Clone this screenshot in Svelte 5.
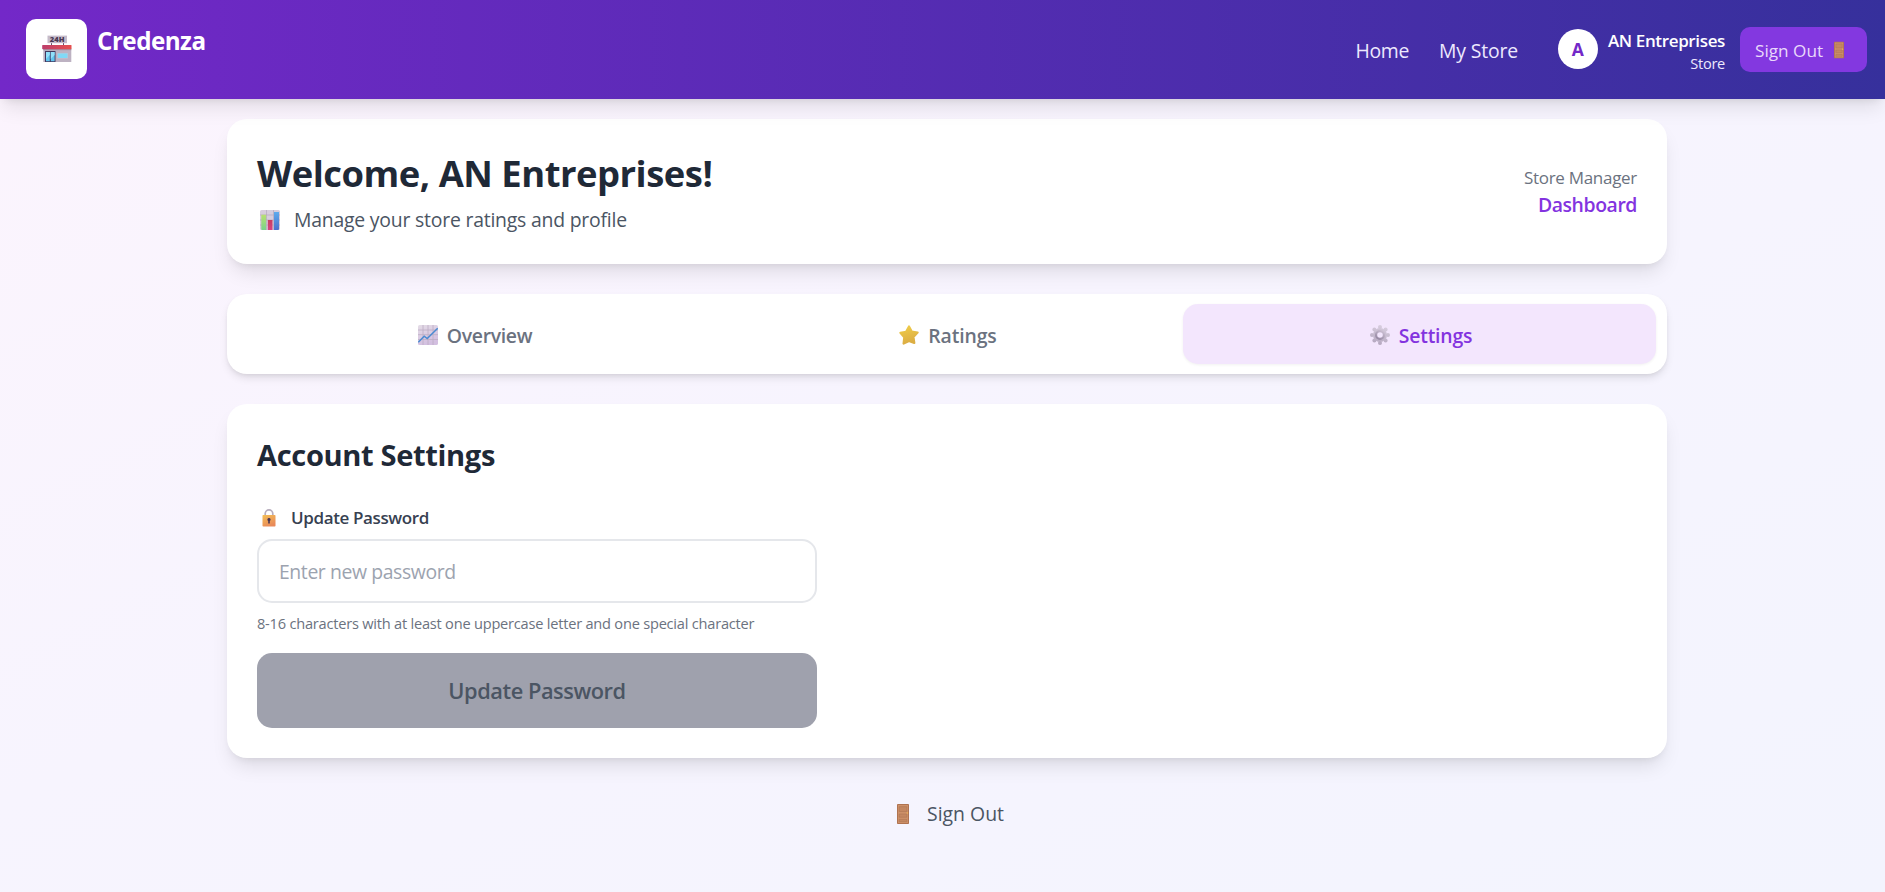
<script>
  let tab = $state('settings');
  let password = $state('');
</script>

{#snippet door(w, h)}
  <svg width={w} height={h} viewBox="0 0 12 20">
    <rect width="12" height="20" rx="0.8" fill="#b07350" />
    <rect x="1" y="1" width="10" height="18" fill="#cd9069" />
    <path d="M2.2 2.7h7.6v4.8H2.2zM2.2 10h7.6v3.2H2.2zM2.2 15.4h7.6v2.2H2.2z" fill="#c48761" stroke="#ae7554" stroke-width=".6" />
    <circle cx="10.4" cy="9" r=".8" fill="#efb052" />
  </svg>
{/snippet}

<div class="page">
  <header>
    <div class="brand">
      <div class="logo">
        <svg width="30" height="28" viewBox="0 0 30 28">
          <path d="M9.5 7v4M21.5 7v4" stroke="#66516d" stroke-width="1" />
          <rect x="5.5" y="0.6" width="19.5" height="7.6" fill="#c5bbca" />
          <text x="15.2" y="7" text-anchor="middle" class="sign">24H</text>
          <rect x="1.3" y="13" width="28" height="14" fill="#bdb2c2" />
          <path d="M1.3 14h28v1.2h-28z" fill="#a396a9" />
          <defs><linearGradient id="awning"><stop stop-color="#bc3d6b" /><stop offset="1" stop-color="#e7504e" /></linearGradient></defs>
          <rect x="0.2" y="10" width="29.3" height="4.2" rx=".6" fill="url(#awning)" />
          <rect x="3" y="16" width="10.5" height="11" fill="#42385f" />
          <path d="M4 17h3.8v9.3H4zM8.8 17h3.8v9.3H8.8z" fill="#62c5ef" />
          <path d="M4 17h3.8v3L4 24zM8.8 17h3.8v3l-3.8 4z" fill="#91e0fa" />
          <rect x="15.2" y="18" width="10.8" height="5.6" fill="#c9bfd0" />
          <rect x="15.7" y="18.4" width="9.8" height="4.6" fill="#81d9f6" />
        </svg>
      </div>
      <span class="name">Credenza</span>
    </div>
    <nav>
      <span class="home">Home</span>
      <span class="my">My Store</span>
    </nav>
    <div class="user">
      <div class="avatar">A</div>
      <div class="who"><b>AN Entreprises</b><span>Store</span></div>
    </div>
    <button class="out">Sign Out {@render door(10, 18)}</button>
  </header>

  <main>
    <section class="card welcome">
      <div>
        <h1>Welcome, AN Entreprises!</h1>
        <p class="sub">
          <svg width="20" height="20" viewBox="0 0 20 20">
            <rect width="20" height="20" rx="1.6" fill="#d7cddd" />
            <path d="M0 5h20M0 10h20M0 15h20M6.5 0v20M13.5 0v20" stroke="#b4a7bd" stroke-width=".7" />
            <defs>
              <linearGradient id="bg" x2="0" y2="1"><stop stop-color="#b9e071" /><stop offset="1" stop-color="#79d18c" /></linearGradient>
              <linearGradient id="br" x2="0" y2="1"><stop stop-color="#c93c60" /><stop offset="1" stop-color="#d74380" /></linearGradient>
              <linearGradient id="bb" x2="0" y2="1"><stop stop-color="#5fabed" /><stop offset="1" stop-color="#4b70cc" /></linearGradient>
            </defs>
            <path d="M1.3 4.7h4.8V20H2Q1.3 20 1.3 19z" fill="url(#bg)" />
            <path d="M7.8 10h4.7v10H7.8z" fill="url(#br)" />
            <path d="M14 2h5v17q0 1-1 1h-4z" fill="url(#bb)" />
          </svg>
          <span>Manage your store ratings and profile</span>
        </p>
      </div>
      <div class="role"><span>Store Manager</span><b>Dashboard</b></div>
    </section>

    <div class="card tabs">
      <button class:active={tab === 'overview'} onclick={() => (tab = 'overview')}>
        <svg width="20" height="20" viewBox="0 0 20 20">
          <defs><linearGradient id="cg" x2=".4" y2="1"><stop stop-color="#e4dce6" /><stop offset="1" stop-color="#d3bfe0" /></linearGradient></defs>
          <rect width="20" height="20" rx="1.6" fill="url(#cg)" />
          <path d="M0 5h20M0 9.7h20M0 14.5h20M5 0v20M10 0v20M15 0v20" stroke="#bcadc4" stroke-width=".8" />
          <path d="M.3 17.2 6.2 11.2 9.2 13.6 19.7 3.2" fill="none" stroke="#4b8bd2" stroke-width="1.5" />
        </svg>
        <span class="overview">Overview</span>
      </button>
      <button class:active={tab === 'ratings'} onclick={() => (tab = 'ratings')}>
        <svg width="20" height="20" viewBox="0 0 20 20">
          <defs><linearGradient id="sg" x2=".3" y2="1"><stop stop-color="#f0cd49" /><stop offset="1" stop-color="#dcae43" /></linearGradient></defs>
          <path d="M10 1.4 12.7 6.6 18.6 7.6 14.4 11.9 15.3 18 10 15.9 4.6 18.6 5.3 12.2 1.4 7.8 7.1 6.8Z" fill="url(#sg)" stroke="url(#sg)" stroke-width="2.2" stroke-linejoin="round" />
        </svg>
        <span class="ratings">Ratings</span>
      </button>
      <button class:active={tab === 'settings'} onclick={() => (tab = 'settings')}>
        <svg width="20" height="20" viewBox="0 0 20 20">
          <defs>
            <linearGradient id="gg" gradientUnits="userSpaceOnUse" x1="13" y1="0" x2="7" y2="20"><stop stop-color="#d9cfe0" /><stop offset="1" stop-color="#b3a6be" /></linearGradient>
            <linearGradient id="gr" x1=".8" y1="0" x2=".2" y2="1"><stop stop-color="#c9bdd1" /><stop offset="1" stop-color="#9688a3" /></linearGradient>
          </defs>
          <g fill="url(#gg)">
            <circle cx="10" cy="10" r="7" />
            <circle cx="10" cy="2" r="2" /><circle cx="10" cy="18" r="2" />
            <circle cx="2" cy="10" r="2" /><circle cx="18" cy="10" r="2" />
            <circle cx="4.4" cy="4.4" r="2" /><circle cx="15.6" cy="15.6" r="2" />
            <circle cx="4.4" cy="15.6" r="2" /><circle cx="15.6" cy="4.4" r="2" />
          </g>
          <circle cx="10" cy="10" r="3.9" fill="#f3e6fd" stroke="url(#gr)" stroke-width="2.2" />
        </svg>
        <span class="settings">Settings</span>
      </button>
    </div>

    <section class="card account">
      <h2>Account Settings</h2>
      <form onsubmit={(e) => e.preventDefault()}>
        <label for="pw">
          <svg width="14" height="18" viewBox="0 0 14 18">
            <defs><linearGradient id="lg" x2=".5" y2="1"><stop stop-color="#f3bf55" /><stop offset="1" stop-color="#e98a59" /></linearGradient></defs>
            <path d="M3.2 7V4.7a3.8 3.8 0 0 1 7.6 0V7" fill="none" stroke="#b7adbd" stroke-width="1.7" />
            <rect x=".5" y="6" width="13" height="11.5" rx=".7" fill="url(#lg)" />
            <path d="M7 9a1.6 1.6 0 0 1 .8 3v2.5H6.2V12A1.6 1.6 0 0 1 7 9z" fill="#483451" />
          </svg>
          <span>Update Password</span>
        </label>
        <input id="pw" type="password" placeholder="Enter new password" bind:value={password} />
        <p class="hint">8-16 characters with at least one uppercase letter and one special character</p>
        <button class="update">Update Password</button>
      </form>
    </section>

    <button class="bottom">{@render door(12, 20)}<span>Sign Out</span></button>
  </main>
</div>

<style>
  :global(body) { overflow: hidden; }
  .page {
    box-sizing: border-box;
    min-height: 892px;
    font-family: "Open Sans", "Noto Sans", sans-serif;
    font-size: 19.4px;
    color: #1f2937;
    background: linear-gradient(to bottom right, #fcf4fd, #f7f4fe 45%, #f3f4fe);
  }
  svg { display: block; flex: none; }
  button { border: 0; padding: 0; margin: 0; background: none; font: inherit; color: inherit; display: flex; align-items: center; }
  h1, h2, p { margin: 0; }

  header {
    position: relative;
    z-index: 1;
    box-sizing: border-box;
    height: 99px;
    padding: 0 18px 1px 26px;
    display: flex;
    align-items: center;
    color: #ede9fe;
    background: linear-gradient(to right, #7328c8, #36309c);
    box-shadow: 0 12px 19px -4px rgba(0, 0, 0, .1), 0 5px 8px -5px rgba(0, 0, 0, .1);
  }
  .brand { display: flex; gap: 10px; margin-right: auto; }
  .logo { width: 61px; height: 60px; border-radius: 10px; background: #fff; display: grid; place-items: center; }
  .sign { font: 800 7.6px "Open Sans", sans-serif; fill: #493752; }
  .name { font-size: 24.25px; font-weight: 700; line-height: 44px; letter-spacing: -.55px; color: #fff; }
  nav { display: flex; gap: 30px; margin-right: 40px; padding-top: 2px; }
  .home { letter-spacing: -.3px; }
  .my { letter-spacing: -.17px; }
  .user { display: flex; align-items: center; gap: 10px; margin-right: 15px; }
  .avatar { width: 40px; height: 40px; border-radius: 50%; background: #fff; color: #7328c8; display: grid; place-items: center; font-size: 17.5px; font-weight: 700; }
  .who { display: flex; flex-direction: column; align-items: flex-end; padding-top: 2px; }
  .who b { font-size: 17px; line-height: 25px; font-weight: 600; letter-spacing: -.36px; color: #fff; }
  .who span { font-size: 14.6px; line-height: 20px; letter-spacing: -.3px; }
  .out { box-sizing: border-box; width: 127px; height: 45px; margin-top: 1px; padding: 1px 0 0 15px; gap: 11px; border-radius: 10px; background: #8338e0; color: #e9d8fb; font-size: 17.2px; }

  main { width: 1440px; margin: 0 0 0 227px; padding-top: 20px; display: flex; flex-direction: column; gap: 30px; }
  .card { box-sizing: border-box; background: #fff; border-radius: 20px; box-shadow: 0 12px 19px -4px rgba(0, 0, 0, .1), 0 5px 8px -5px rgba(0, 0, 0, .1); }
  .welcome { height: 145px; padding: 32px 30px 30px; display: flex; justify-content: space-between; align-items: center; }
  h1 { font-size: 36.4px; line-height: 45px; letter-spacing: -.49px; padding-top: 1px; }
  .sub { display: flex; align-items: center; gap: 14px; margin-top: 9px; padding-left: 3px; line-height: 30px; letter-spacing: -.21px; color: #4b5563; }
  .sub svg { margin-top: -1px; }
  .role { display: flex; flex-direction: column; align-items: flex-end; }
  .role span { font-size: 17px; line-height: 25px; letter-spacing: -.29px; color: #6b7280; }
  .role b { line-height: 30px; font-weight: 560; letter-spacing: -.42px; color: #8333df; }

  .tabs { height: 80px; padding: 10px 11px 10px 10px; display: grid; grid-template-columns: repeat(3, 1fr); box-shadow: 0 5px 8px -1px rgba(0, 0, 0, .1), 0 2px 5px -2px rgba(0, 0, 0, .1); }
  .tabs button { justify-content: center; gap: 9px; padding: 2px 0 0 3px; border-radius: 15px; color: #6b7280; font-weight: 560; }
  .tabs .active { background: #f3e6fd; color: #8333df; box-shadow: 0 1px 3px rgba(0, 0, 0, .06); }
  .overview { letter-spacing: -.32px; }
  .ratings { letter-spacing: -.12px; }
  .settings { letter-spacing: -.2px; }

  .account { height: 354px; padding: 30px; }
  h2 { font-size: 29.1px; line-height: 40px; letter-spacing: -.36px; margin-bottom: 29px; padding-top: 1px; }
  form { width: 560px; }
  label { display: flex; align-items: center; gap: 15px; padding: 1px 0 0 5px; font-size: 17px; line-height: 25px; font-weight: 560; letter-spacing: -.38px; color: #374151; margin-bottom: 9px; }
  input { box-sizing: border-box; display: block; width: 560px; height: 64px; padding: 0 20px; border: 2px solid #e5e7eb; border-radius: 15px; background: #fff; font: inherit; font-size: 19.4px; letter-spacing: -.4px; outline: 0; }
  input::placeholder { color: #9ca3af; opacity: 1; }
  .hint { margin: 10px 0 20px; font-size: 14.6px; line-height: 20px; letter-spacing: -.22px; color: #6b7280; white-space: nowrap; }
  .update { width: 560px; height: 75px; justify-content: center; border-radius: 15px; background: #9fa1ad; color: #4b5563; font-size: 21.8px; font-weight: 560; letter-spacing: -.45px; }
  .bottom { align-self: center; gap: 18px; padding: 11px 0; margin-left: 7px; line-height: 30px; color: #4b5563; }
</style>
